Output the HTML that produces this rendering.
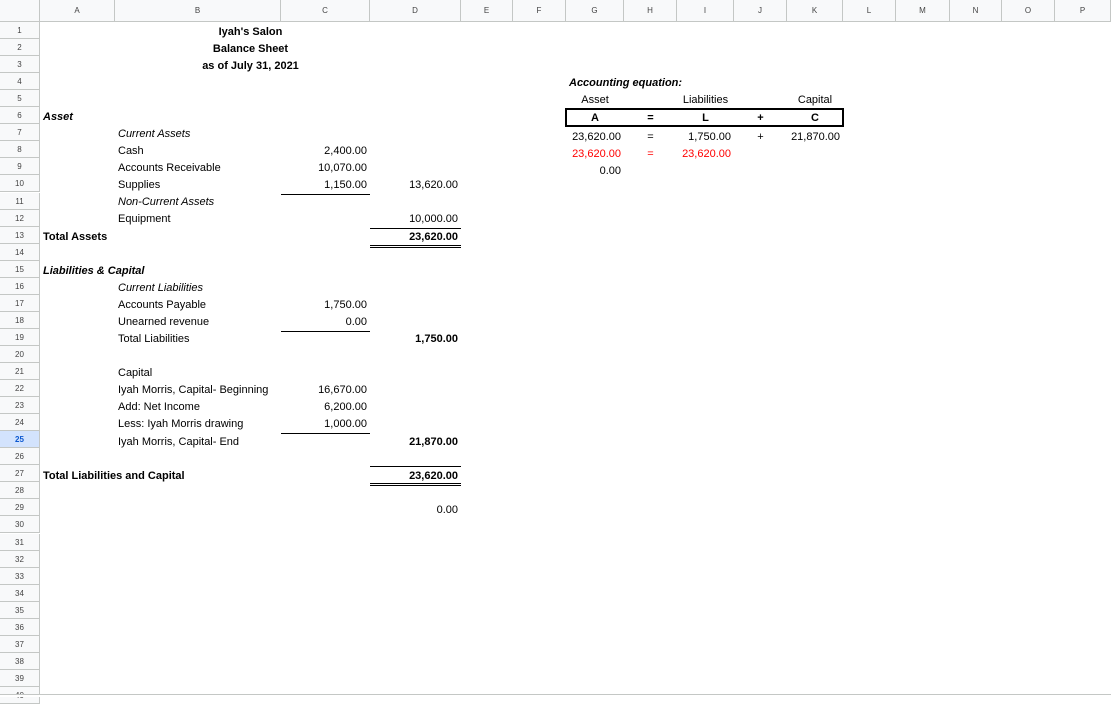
<!DOCTYPE html>
<html><head><meta charset="utf-8"><style>
*{margin:0;padding:0;box-sizing:border-box}
body{width:1111px;height:697px;overflow:hidden;background:#fff;position:relative;font-family:"Liberation Sans",Arial,sans-serif;font-size:11px;color:#000}
.h{position:absolute;top:0;height:22px;background:#f8f9fa;border-right:1px solid #c4c7c5;border-bottom:1px solid #c4c7c5;color:#444;font-size:8px;text-align:center;line-height:22px}
.r{position:absolute;left:0;width:40px;height:17.05px;background:#f8f9fa;border-right:1px solid #c4c7c5;border-bottom:1px solid #c4c7c5;color:#444;font-size:8px;text-align:center;line-height:17px}
.c{position:absolute;height:17px;line-height:17px;white-space:nowrap;padding:2px 3px 0}
.R{text-align:right}.C{text-align:center}.b{font-weight:bold}.i{font-style:italic}.red{color:#f00}
.ln{position:absolute;height:0;border-top:1px solid #000}
</style></head><body>
<div class="h" style="left:0;width:40px"></div>
<div class="h" style="left:40px;width:75px">A</div>
<div class="h" style="left:115px;width:166px">B</div>
<div class="h" style="left:281px;width:89px">C</div>
<div class="h" style="left:370px;width:91px">D</div>
<div class="h" style="left:461px;width:52px">E</div>
<div class="h" style="left:513px;width:53px">F</div>
<div class="h" style="left:566px;width:58px">G</div>
<div class="h" style="left:624px;width:53px">H</div>
<div class="h" style="left:677px;width:57px">I</div>
<div class="h" style="left:734px;width:53px">J</div>
<div class="h" style="left:787px;width:56px">K</div>
<div class="h" style="left:843px;width:53px">L</div>
<div class="h" style="left:896px;width:54px">M</div>
<div class="h" style="left:950px;width:52px">N</div>
<div class="h" style="left:1002px;width:53px">O</div>
<div class="h" style="left:1055px;width:56px">P</div>
<div id="rows"></div>
<div style="position:absolute;left:0;top:694px;width:1111px;height:3px;background:#fff;border-top:1px solid #c4c7c5"></div>
<script>
var s='';for(var n=1;n<=40;n++){var t=22+17.05*(n-1);s+='<div class="r" style="top:'+t+'px'+(n==25?';background:#d3e3fd;color:#0b57d0;font-weight:bold':'')+'">'+n+'</div>';}
document.getElementById('rows').innerHTML=s;
</script>
<div class="c b C" style="left:40px;width:421px;top:22px">Iyah's Salon</div>
<div class="c b C" style="left:40px;width:421px;top:39px">Balance Sheet</div>
<div class="c b C" style="left:40px;width:421px;top:56px">as of July 31, 2021</div>

<div class="c b i" style="left:40px;top:107px">Asset</div>
<div class="c i" style="left:115px;top:124px">Current Assets</div>
<div class="c" style="left:115px;top:141px">Cash</div>
<div class="c R" style="left:281px;width:89px;top:141px">2,400.00</div>
<div class="c" style="left:115px;top:158px">Accounts Receivable</div>
<div class="c R" style="left:281px;width:89px;top:158px">10,070.00</div>
<div class="c" style="left:115px;top:175px">Supplies</div>
<div class="c R" style="left:281px;width:89px;top:175px">1,150.00</div>
<div class="c R" style="left:370px;width:91px;top:175px">13,620.00</div>
<div class="ln" style="left:281px;width:89px;top:194px"></div>
<div class="c i" style="left:115px;top:192px">Non-Current Assets</div>
<div class="c" style="left:115px;top:209px">Equipment</div>
<div class="c R" style="left:370px;width:91px;top:209px">10,000.00</div>
<div class="ln" style="left:370px;width:91px;top:228px"></div>
<div class="c b" style="left:40px;top:227px">Total Assets</div>
<div class="c R b" style="left:370px;width:91px;top:227px">23,620.00</div>
<div style="position:absolute;left:370px;width:91px;top:245px;height:3px;border-top:1px solid #000;border-bottom:1px solid #000"></div>

<div class="c b i" style="left:40px;top:261px">Liabilities &amp; Capital</div>
<div class="c i" style="left:115px;top:278px">Current Liabilities</div>
<div class="c" style="left:115px;top:295px">Accounts Payable</div>
<div class="c R" style="left:281px;width:89px;top:295px">1,750.00</div>
<div class="c" style="left:115px;top:312px">Unearned revenue</div>
<div class="c R" style="left:281px;width:89px;top:312px">0.00</div>
<div class="ln" style="left:281px;width:89px;top:331px"></div>
<div class="c" style="left:115px;top:329px">Total Liabilities</div>
<div class="c R b" style="left:370px;width:91px;top:329px">1,750.00</div>

<div class="c" style="left:115px;top:363px">Capital</div>
<div class="c" style="left:115px;top:380px">Iyah Morris, Capital- Beginning</div>
<div class="c R" style="left:281px;width:89px;top:380px">16,670.00</div>
<div class="c" style="left:115px;top:397px">Add: Net Income</div>
<div class="c R" style="left:281px;width:89px;top:397px">6,200.00</div>
<div class="c" style="left:115px;top:414px">Less: Iyah Morris drawing</div>
<div class="c R" style="left:281px;width:89px;top:414px">1,000.00</div>
<div class="ln" style="left:281px;width:89px;top:433px"></div>
<div class="c" style="left:115px;top:432px">Iyah Morris, Capital- End</div>
<div class="c R b" style="left:370px;width:91px;top:432px">21,870.00</div>

<div class="ln" style="left:370px;width:91px;top:466px"></div>
<div class="c b" style="left:40px;top:466px">Total Liabilities and Capital</div>
<div class="c R b" style="left:370px;width:91px;top:466px">23,620.00</div>
<div style="position:absolute;left:370px;width:91px;top:483px;height:3px;border-top:1px solid #000;border-bottom:1px solid #000"></div>
<div class="c R" style="left:370px;width:91px;top:500px">0.00</div>

<div class="c b i" style="left:566px;top:73px">Accounting equation:</div>
<div class="c C" style="left:566px;width:58px;top:90px">Asset</div>
<div class="c C" style="left:677px;width:57px;top:90px">Liabilities</div>
<div class="c C" style="left:787px;width:56px;top:90px">Capital</div>
<div style="position:absolute;left:565px;top:108px;width:279px;height:19px;border:2px solid #000"></div>
<div class="c C b" style="left:566px;width:58px;top:108px">A</div>
<div class="c C b" style="left:624px;width:53px;top:108px">=</div>
<div class="c C b" style="left:677px;width:57px;top:108px">L</div>
<div class="c C b" style="left:734px;width:53px;top:108px">+</div>
<div class="c C b" style="left:787px;width:56px;top:108px">C</div>
<div class="c R" style="left:556px;width:68px;top:127px">23,620.00</div>
<div class="c C" style="left:624px;width:53px;top:127px">=</div>
<div class="c R" style="left:667px;width:67px;top:127px">1,750.00</div>
<div class="c C" style="left:734px;width:53px;top:127px">+</div>
<div class="c R" style="left:777px;width:66px;top:127px">21,870.00</div>
<div class="c R red" style="left:556px;width:68px;top:144px">23,620.00</div>
<div class="c C red" style="left:624px;width:53px;top:144px">=</div>
<div class="c R red" style="left:667px;width:67px;top:144px">23,620.00</div>
<div class="c R" style="left:556px;width:68px;top:161px">0.00</div>
</body></html>
